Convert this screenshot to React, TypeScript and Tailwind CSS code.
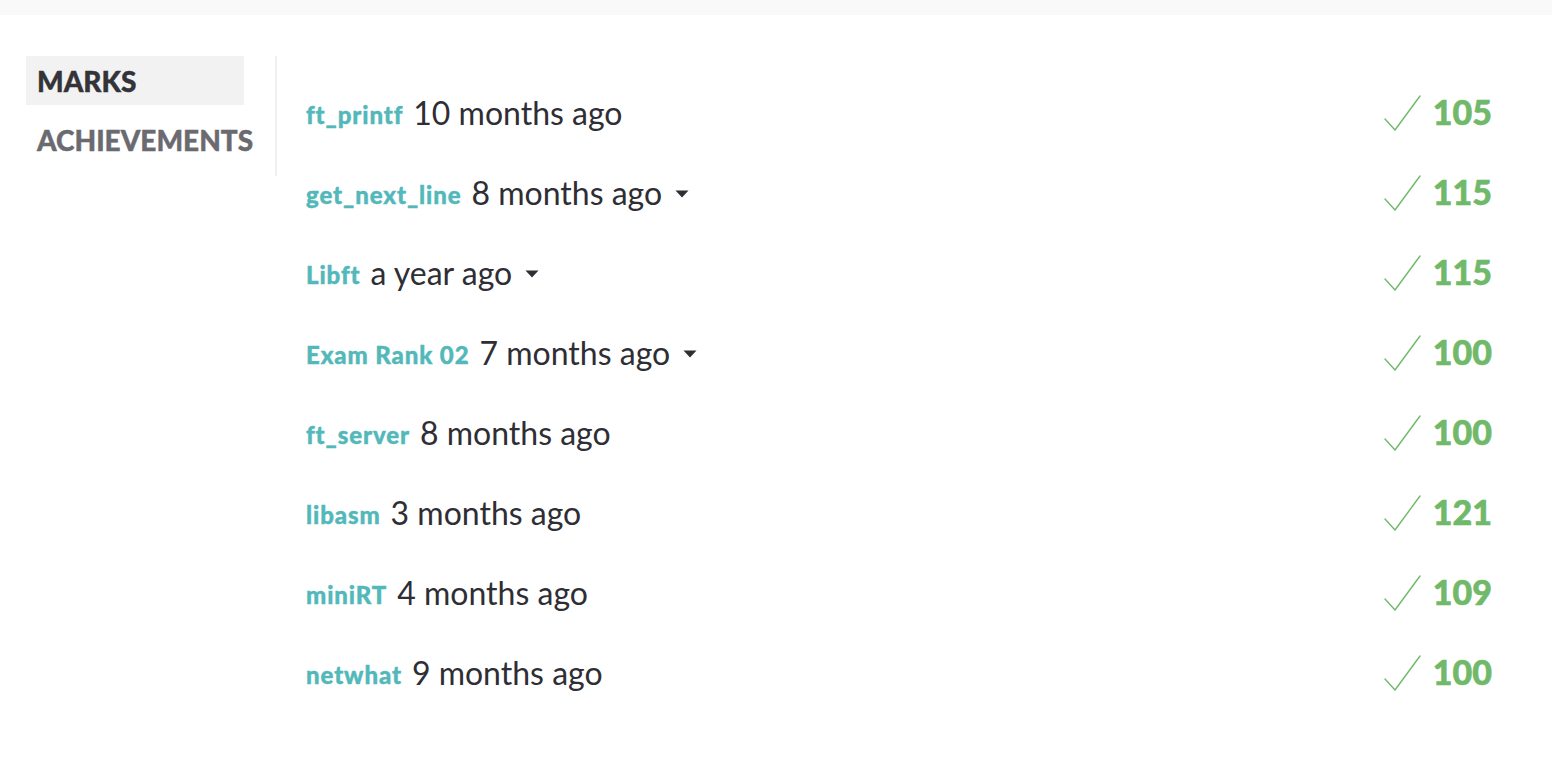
import React from "react";

const rows = [
  { name: "ft_printf", time: "10 months ago", caret: false, mark: "105" },
  { name: "get_next_line", time: "8 months ago", caret: true, mark: "115" },
  { name: "Libft", time: "a year ago", caret: true, mark: "115" },
  { name: "Exam Rank 02", time: "7 months ago", caret: true, mark: "100" },
  { name: "ft_server", time: "8 months ago", caret: false, mark: "100" },
  { name: "libasm", time: "3 months ago", caret: false, mark: "121" },
  { name: "miniRT", time: "4 months ago", caret: false, mark: "109" },
  { name: "netwhat", time: "9 months ago", caret: false, mark: "100" },
];

function Check() {
  return (
    <svg width="37" height="37" viewBox="0 0 37 37" className="shrink-0 ml-[3px]">
      <polyline
        points="1,24 11,35 36,1"
        fill="none"
        stroke="#70b96a"
        strokeWidth="1.4"
        strokeLinecap="round"
        strokeLinejoin="round"
      />
    </svg>
  );
}

function Caret() {
  return (
    <svg width="14" height="8" viewBox="0 0 14 8" className="ml-[13px] mt-[2px]">
      <polygon points="0.5,0.5 13.5,0.5 7,7.5" fill="#2e2e34" />
    </svg>
  );
}

export default function App() {
  return (
    <div className="min-h-[778px] bg-white" style={{ fontFamily: "Lato, 'Noto Sans', sans-serif" }}>
      <div className="h-[15px] bg-[#f9f9f9]" />
      <div className="flex pt-[41px] pl-[26px] pr-[60px]">
        <div className="w-[251px] shrink-0 pr-[31px] border-r-2 border-[#f0f0f0] h-[120px]">
          <div className="h-[49px] bg-[#f2f2f2] flex items-center pl-[11px] text-[28px] font-black text-[#333338] [-webkit-text-stroke:0.4px_#333338]">
            MARKS
          </div>
          <div className="mt-[10px] h-[49px] flex items-center pl-[11px] text-[28px] font-black text-[#6a6a70] [-webkit-text-stroke:0.4px_#6a6a70]">
            ACHIEVEMENTS
          </div>
        </div>
        <div className="flex-1 pl-[29px] pt-[17px]">
          {rows.map((r) => (
            <div key={r.name} className="h-[80px] flex items-center justify-between">
              <div className="flex items-center">
                <span className="text-[24px] font-black text-[#52b8ba] tracking-[0.9px] mr-[10px] mt-[4px] [-webkit-text-stroke:0.4px_#52b8ba]">
                  {r.name}
                </span>
                <span className="text-[32px] text-[#2e2e34]">{r.time}</span>
                {r.caret && <Caret />}
              </div>
              <div className="flex items-end">
                <Check />
                <span className="ml-[12px] text-[34px] leading-none font-black text-[#70b96a] tabular-nums mb-[3px] [-webkit-text-stroke:0.6px_#70b96a]">
                  {r.mark}
                </span>
              </div>
            </div>
          ))}
        </div>
      </div>
    </div>
  );
}
